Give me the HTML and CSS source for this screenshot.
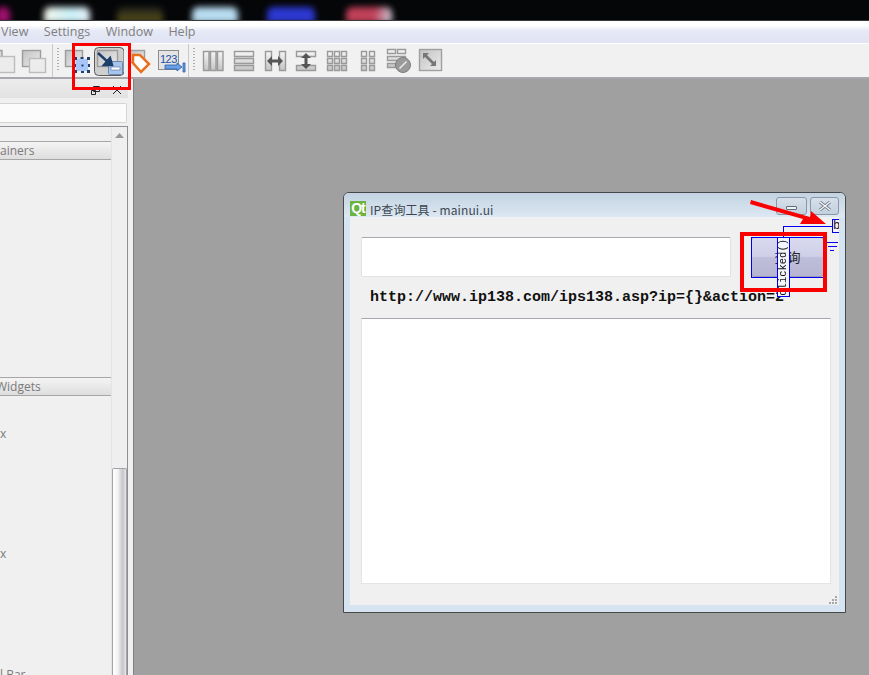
FILE: index.html
```html
<!DOCTYPE html>
<html lang="zh">
<head>
<meta charset="utf-8">
<title>Qt Designer</title>
<link rel="stylesheet" href="styles.css">
</head>
<body>
<svg class="defs" aria-hidden="true"><defs>
  <linearGradient id="barg" x1="0" y1="0" x2="0" y2="1"><stop offset="0" stop-color="#f6f6f6"/><stop offset="1" stop-color="#c4c4c4"/></linearGradient>
  <linearGradient id="boxg" x1="0" y1="0" x2="1" y2="1"><stop offset="0" stop-color="#c2c2c2"/><stop offset="1" stop-color="#ececec"/></linearGradient>
</defs></svg>
<div class="app">
  <div class="desktop">
    <span class="blob b1"></span><span class="blob b2"></span><span class="blob b3"></span><span class="blob b4"></span><span class="blob b5"></span><span class="blob b6"></span>
  </div>
  <div class="menubar"><span>View</span><span>Settings</span><span>Window</span><span>Help</span></div>
  <div class="toolbar">
    <svg class="tool first" viewBox="0 0 31 34"><rect class="lt" fill="url(#boxg)" x="-6" y="6.500" width="18" height="16"/><rect class="lt2" x="8.500" y="12.500" width="16" height="16"/></svg>
    <svg class="tool" viewBox="0 0 31 34"><rect class="lt" fill="url(#boxg)" x="1.500" y="6.500" width="18" height="16"/><rect class="lt2" x="8.500" y="14.500" width="16" height="14"/></svg>
    <i class="sep"></i><i class="grip"></i>
    <svg class="tool" viewBox="0 0 31 34"><rect class="lt" fill="url(#boxg)" x="3.500" y="6.500" width="17" height="16"/><rect class="blue" x="14" y="15" width="12" height="12"/><path class="hd" d="M12 13h3v3h-3zM18.500 13h3v2h-3zM25 13h3v3h-3zM12 20h2v3h-2zM26 20h2v3h-2zM12 26h3v3h-3zM19 27h3v2h-3zM25 26h3v3h-3zM19.500 20.500h2v2h-2z"/></svg>
    <svg class="tool" viewBox="0 0 31 34"><rect class="active" x="1.500" y="3.500" width="29.500" height="28" rx="4"/><rect class="lt" fill="url(#boxg)" x="4.500" y="6.500" width="20" height="16"/><rect class="blue2" x="15.500" y="17.500" width="14" height="13" rx="1"/><path class="minus" d="M18 23h9v3h-9z"/><path class="arrow" d="M5 9l11 10M19 21l-8 0 6-7z"/></svg>
    <svg class="tool" viewBox="0 0 31 34"><rect class="lt" fill="url(#boxg)" x="5.500" y="6.500" width="15" height="12"/><path class="tag" d="M9 11h7l9 9-8 8-8-9z"/><path class="tagin" d="M17 15l5 5-5 5-5-5z"/></svg>
    <svg class="tool" viewBox="0 0 31 34"><rect class="lt3" x="3.500" y="6.500" width="20" height="19"/><text class="num" x="5" y="19">123</text><path class="barrow" d="M10 21h12v-2l5 4-5 4v-2h-12zM28 19h2v9h-2z"/></svg>
    <i class="sep second"></i><i class="grip"></i>
    <svg class="tool lead" viewBox="0 0 31 34"><path class="bar" fill="url(#barg)" d="M3.500 7.500h5.500v19h-5.500zM10.500 7.500h5.500v19h-5.500zM17.500 7.500h5.500v19h-5.500z"/></svg>
    <svg class="tool" viewBox="0 0 31 34"><path class="bar" fill="url(#barg)" d="M3.500 7.500h19v5h-19zM3.500 14.500h19v5h-19zM3.500 21.500h19v5h-19z"/></svg>
    <svg class="tool" viewBox="0 0 31 34"><path class="bar" fill="url(#barg)" d="M3.500 7.500h6v19h-6zM17.500 7.500h6v19h-6z"/><path class="dark" d="M5 17l5-5v3.500h6v-3.500l5 5-5 5v-3.500h-6v3.500z"/></svg>
    <svg class="tool" viewBox="0 0 31 34"><path class="bar" fill="url(#barg)" d="M3.500 7.500h19v5h-19zM3.500 21.500h19v5h-19z"/><path class="dark" d="M13 9l5 5h-3.500v6h3.500l-5 5-5-5h3.500v-6h-3.500z"/></svg>
    <svg class="tool" viewBox="0 0 31 34"><path class="bar" fill="url(#barg)" d="M3.500 7.500h5v5h-5zM10.500 7.500h5v5h-5zM17.500 7.500h5v5h-5zM3.500 14.500h5v5h-5zM10.500 14.500h5v5h-5zM17.500 14.500h5v5h-5zM3.500 21.500h5v5h-5zM10.500 21.500h5v5h-5zM17.500 21.500h5v5h-5z"/></svg>
    <svg class="tool" viewBox="0 0 31 34"><path class="bar" fill="url(#barg)" d="M6.500 7.500h5v5h-5zM14.500 7.500h5v5h-5zM6.500 14.500h5v5h-5zM14.500 14.500h5v5h-5zM6.500 21.500h5v5h-5zM14.500 21.500h5v5h-5z"/></svg>
    <svg class="tool" viewBox="0 0 31 34"><path class="bar" fill="url(#barg)" d="M1.500 5.500h8v4h-8zM11.500 5.500h8v4h-8zM1.500 12.500h18v4h-18zM1.500 19.500h8v4h-8z"/><circle class="nocirc" cx="17" cy="21" r="7.500"/><path class="noslash" d="M13.500 24.500l7-7"/></svg>
    <svg class="tool" viewBox="0 0 31 34"><rect class="adj" fill="url(#boxg)" x="2.500" y="5.500" width="22" height="21"/><path class="adjarrow" d="M6 9h6l-2 2 7 7 2-2v6h-6l2-2-7-7-2 2z"/></svg>
  </div>
  <div class="main">
    <aside class="panel">
      <div class="docktitle">
        <svg class="dockicon" viewBox="0 0 10 10"><path d="M2.500 1.500h6v5h-6zM.5 5.500h4v4h-4z"/></svg>
        <svg class="dockicon" viewBox="0 0 10 10"><path d="M1 1l8 8M9 1l-8 8"/></svg>
      </div>
      <div class="filter"></div>
      <div class="list">
        <div class="items">
          <div class="head h1">ainers</div>
          <div class="head h2">Widgets</div>
          <div class="item i1">x</div>
          <div class="item i2">x</div>
          <div class="item i3">l Bar</div>
        </div>
        <div class="scroll">
          <svg class="up" viewBox="0 0 9 5"><path d="M0 5L4.500 0 9 5z"/></svg>
          <div class="thumb"></div>
        </div>
      </div>
    </aside>
    <main class="canvas">
      <section class="window">
        <header class="wtitle">
          <span class="qt">Qt</span>
          <span class="wname">IP查询工具 - mainui.ui</span>
          <span class="wbtns">
            <span class="wbtn min"><i></i></span>
            <span class="wbtn close">
              <svg viewBox="0 0 14 10"><path class="xo" d="M2 1l10 8M12 1L2 9"/><path class="xi" d="M2 1l10 8M12 1L2 9"/></svg>
            </span>
          </span>
        </header>
        <div class="client">
          <div class="row">
            <div class="lineedit"></div>
            <div class="qbtn">查询</div>
          </div>
          <div class="url">http://www.ip138.com/ips138.asp?ip={}&amp;action=2</div>
          <div class="textedit"></div>
          <div class="grip2"><svg viewBox="0 0 8 8"><path d="M6 0h2v2h-2zM3 3h2v2h-2zM6 3h2v2h-2zM0 6h2v2h-2zM3 6h2v2h-2zM6 6h2v2h-2z"/></svg></div>
        </div>
      </section>
    </main>
  </div>

  <!-- signal/slot overlay and annotations -->
  <div class="sig-btn"></div>
  <div class="sig-wire"></div>
  <div class="sig-clicked"><span>clicked()</span></div>
  <div class="sig-slot">b</div>
  <div class="sig-ground"><i></i><i></i><i></i></div>
  <div class="red r1"></div>
  <div class="red r2"></div>
  <svg class="redarrow" viewBox="0 0 90 35"><path d="M1 2L60 19l1-6 15 13-26 0 3-5L0 6z"/></svg>
</div>
</body>
</html>
```
FILE: styles.css
```css
* { box-sizing: border-box; }
html, body { margin: 0; padding: 0; }
body { font-family: "Open Sans", "Noto Sans CJK SC", sans-serif; background: #f0f0f0; }
.defs { position: absolute; width: 0; height: 0; }
.app { position: relative; width: 869px; height: 675px; overflow: hidden; display: flex; flex-direction: column; }

.desktop { height: 21px; background: #050608; display: flex; overflow: hidden; flex: none; border-bottom: 1px solid #3a3a3a; }
.blob { display: block; height: 16px; margin-top: 7px; filter: blur(3px); border-radius: 6px 6px 0 0; flex: none; }
.b1 { width: 14px; margin-left: -4px; background: #a01070; }
.b2 { width: 46px; margin-left: 34px; background: linear-gradient(90deg, #f4f4ea, #c8f0f8 60%, #e8f0f8); }
.b3 { width: 46px; margin-left: 27px; background: linear-gradient(#20201c, #5a5418); }
.b4 { width: 46px; margin-left: 29px; background: #b8dcf0; }
.b5 { width: 48px; margin-left: 29px; background: #2c38d0; }
.b6 { width: 46px; margin-left: 31px; background: linear-gradient(100deg, #c04058 60%, #c8d8e8); }

.menubar { height: 23px; flex: none; display: flex; gap: 15.5px; padding: 2px 0 0 1px; font-size: 12.5px; line-height: 18px; color: #808080; background: linear-gradient(#fff 0, #fff 20%, #e6e9f6 45%, #dfe3f3 100%); border-bottom: 1px solid #fff; }

.toolbar { height: 35px; flex: none; display: flex; align-items: flex-start; background: #f1f1f1; border-bottom: 2px solid #a8a8ac; }
.tool { width: 31px; height: 34px; flex: none; }
.first { margin-left: -10px; }
.sep { width: 1px; height: 33px; background: #c8c8cc; flex: none; }
.grip { width: 2px; height: 24px; margin: 4px 3px 0 4px; flex: none; background: repeating-linear-gradient(#b0b0b0 0 1px, transparent 1px 3px); }
.sep.second { margin-left: 2px; }
.lead { margin-left: 2px; }
.lt { stroke: #9c9c9c; stroke-width: 1.4; }
.lt2 { fill: #ececec; stroke: #bcbcbc; stroke-width: 1.4; }
.lt3 { fill: #e4e4e4; stroke: #8c8c8c; }
.blue { fill: #a9c6fa; }
.hd { fill: #20406c; }
.active { fill: #cfcfcf; stroke: #5a5a5a; }
.blue2 { fill: #a7c4ec; stroke: #6a88b0; }
.minus { fill: #fff; stroke: #4f6f9a; stroke-width: .6; }
.arrow { stroke: #1d3f6c; stroke-width: 2.5; fill: #1d3f6c; }
.tag { fill: #fff; stroke: #e8701c; stroke-width: 2.5; }
.tagin { fill: #fff; }
.num { font-family: "Liberation Sans", sans-serif; font-size: 11px; fill: #2252a8; letter-spacing: -.5px; }
.barrow { fill: #6aa0e8; stroke: #2a5aa8; stroke-width: .8; }
.bar { stroke: #9a9a9a; stroke-width: 1.4; }
.dark { fill: #555; }
.nocirc { fill: #9a9a9a; stroke: #7c7c7c; }
.noslash { stroke: #e8e8e8; stroke-width: 1.6; }
.adj { stroke: #a0a0a0; stroke-width: 1.4; }
.adjarrow { fill: #777; }

.main { flex: 1; display: flex; min-height: 0; }
.panel { width: 133px; flex: none; display: flex; flex-direction: column; background: #f0f0f0; padding-right: 5px; }
.docktitle { height: 19px; flex: none; display: flex; gap: 11px; justify-content: flex-end; padding: 6px 6px 0 0; background: linear-gradient(#ececec, #e2e2e2); }
.dockicon { width: 10px; height: 10px; fill: none; stroke: #222; }
.filter { height: 20px; flex: none; margin-top: 5px; background: #fbfbfb; border: 1px solid #d4d4d4; border-left: 0; border-radius: 0 2px 2px 0; margin-right: 1px; }
.list { flex: 1; margin-top: 3px; display: flex; border: 1px solid #8e8e94; border-left: 0; border-bottom: 0; min-height: 0; background: #f0f0f0; }
.items { flex: 1; min-width: 0; overflow: hidden; font-size: 12px; color: #7a7a7a; }
.head { height: 19px; line-height: 17px; background: linear-gradient(#f4f4f4, #dedede); border-top: 1px solid #a6a6a6; border-bottom: 1px solid #a6a6a6; }
.h1 { margin-top: 14px; }
.h2 { margin-top: 217px; text-indent: -4px; }
.item { height: 18px; line-height: 18px; }
.i1 { margin-top: 29px; }
.i2 { margin-top: 102px; }
.i3 { margin-top: 103px; }
.scroll { width: 16px; flex: none; background: #efefef; border-left: 1px solid #e4e4e4; display: flex; flex-direction: column; align-items: center; position: relative; }
.up { width: 9px; height: 5px; margin-top: 6px; fill: #999; flex: none; }
.thumb { width: 15px; flex: 1; margin-top: 330px; background: linear-gradient(90deg, #fff, #f4f4f4 35%, #c6c6ca 75%, #e8e8e8); border: 1px solid #a4a4a8; border-bottom: 0; border-radius: 2px 2px 0 0; }

.canvas { flex: 1; position: relative; background: #a0a0a0; border-left: 1px solid #80808a; }
.window { position: absolute; left: 209px; top: 113px; width: 503px; height: 421px; border: 1px solid #45474a; border-radius: 6px 6px 0 0; background: #d6e4f2; display: flex; flex-direction: column; padding: 0 6px 7px; }
.wtitle { height: 24px; flex: none; display: flex; align-items: flex-start; margin: 0 -6px; padding: 0 6px; background: linear-gradient(#c3d3e1, #dce8f3); border-radius: 5px 5px 0 0; position: relative; }
.qt { width: 16px; height: 15px; margin-top: 8px; flex: none; background: #6db33f; color: #fff; font: bold 14px/15px "Liberation Sans", sans-serif; text-align: center; letter-spacing: -1px; }
.wname { margin: 9px 0 0 4px; font: 12px/15px "Noto Sans CJK SC", "Noto Sans", sans-serif; letter-spacing: .1px; color: #3e4750; }
.wbtns { margin-left: auto; display: flex; gap: 3px; padding-top: 4px; }
.wbtn { height: 18px; width: 31px; border: 1px solid #8a97a6; border-radius: 3px; background: linear-gradient(#d6e0ea, #c2d0de); display: flex; align-items: center; justify-content: center; }
.wbtn.close { width: 29px; }
.min i { display: block; width: 11px; height: 4px; margin-top: 4px; background: #eef2f6; border: 1px solid #5f6b78; border-radius: 1px; }
.close svg { width: 14px; height: 10px; fill: none; }
.xo { stroke: #6f7a86; stroke-width: 3; }
.xi { stroke: #f4f6f8; stroke-width: 1.4; }

.client { flex: 1; background: #f0f0f0; padding: 20px 8px 21px 11px; display: flex; flex-direction: column; position: relative; }
.row { display: flex; gap: 20px; flex: none; }
.lineedit { width: 370px; height: 40px; background: #fff; border: 1px solid #e2e2e6; border-top-color: #a8a8b0; border-radius: 2px; flex: none; }
.qbtn { width: 73px; height: 40px; flex: none; border: 1px solid #9a9ab4; border-radius: 3px; background: linear-gradient(#d9d9f0, #cfcfe8 48%, #bebeda 52%, #b6b6d2); font: 13px/38px "Noto Sans CJK SC", sans-serif; color: #222; text-align: center; }
.url { height: 41px; padding: 11px 0 0 9px; font: bold 15px/20px "Liberation Mono", monospace; color: #111; flex: none; white-space: nowrap; }
.textedit { flex: 1; background: #fff; border: 1px solid #e4e4e8; border-top-color: #a8a8b0; }
.grip2 { position: absolute; right: 2px; bottom: 1px; width: 8px; height: 8px; }
.grip2 svg { display: block; width: 8px; height: 8px; fill: #a8a8a8; }

.sig-btn { position: absolute; left: 751px; top: 237px; width: 73px; height: 41px; border: 1px solid #0000f0; }
.sig-wire { position: absolute; left: 783px; top: 226px; width: 50px; height: 12px; border: 1px solid #0000f0; border-bottom: 0; border-right: 0; }
.sig-clicked { position: absolute; left: 777px; top: 237px; width: 13px; height: 60px; background: #f4f4fc; border: 1px solid #0000f0; display: flex; align-items: center; justify-content: center; }
.sig-clicked span { writing-mode: vertical-rl; transform: rotate(180deg); font: 10.5px/11px "Liberation Mono", monospace; color: #111; }
.sig-slot { position: absolute; left: 832px; top: 219px; width: 7px; height: 14px; background: #f4f4f8; border: 1px solid #0000f0; border-right: 0; overflow: hidden; font: 12px/12px "Liberation Mono", monospace; color: #111; }
.sig-ground { position: absolute; left: 826px; top: 242px; width: 12px; display: flex; flex-direction: column; gap: 3px; align-items: center; }
.sig-ground i { display: block; height: 1px; background: #0000f0; }
.sig-ground i:nth-child(1) { width: 12px; }
.sig-ground i:nth-child(2) { width: 9px; }
.sig-ground i:nth-child(3) { width: 4px; }

.red { position: absolute; border: 3px solid #fb0000; }
.r1 { left: 72px; top: 43px; width: 59px; height: 47px; }
.r2 { left: 740px; top: 232px; width: 87px; height: 60px; border-width: 4px; }
.redarrow { position: absolute; left: 750px; top: 198px; width: 90px; height: 35px; fill: #fb0000; }
```
